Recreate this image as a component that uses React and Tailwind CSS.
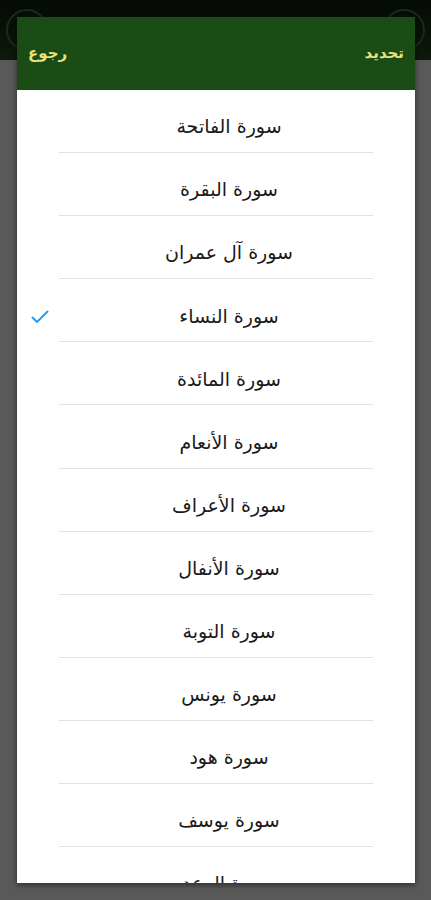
import React from 'react';

const surahs = [
  "سورة الفاتحة",
  "سورة البقرة",
  "سورة آل عمران",
  "سورة النساء",
  "سورة المائدة",
  "سورة الأنعام",
  "سورة الأعراف",
  "سورة الأنفال",
  "سورة التوبة",
  "سورة يونس",
  "سورة هود",
  "سورة يوسف",
  "سورة الرعد",
];

export default function App() {
  return (
    <div className="relative w-[431px] h-[900px] overflow-hidden bg-[#595959]" style={{ fontFamily: '"DejaVu Sans", sans-serif' }}>
      {/* app behind the dialog */}
      <div className="h-[60px] bg-gradient-to-b from-[#050a05] to-[#0d1a0d] flex items-center justify-between px-[6px]">
        <div className="w-[42px] h-[42px] rounded-full border-2 border-[#1e2a1e]" />
        <div className="w-[42px] h-[42px] rounded-full border-2 border-[#1e2a1e]" />
      </div>

      {/* dialog */}
      <div className="absolute left-[17px] top-[17px] w-[398px] h-[866px] bg-white overflow-hidden shadow-[0_2px_6px_rgba(0,0,0,0.5)] flex flex-col">
        <div className="h-[73px] shrink-0 bg-[#1b4c15] flex items-center justify-between px-[11px] text-[#e8e27a] text-[15px] font-bold" dir="ltr">
          <span dir="rtl">رجوع</span>
          <span dir="rtl">تحديد</span>
        </div>

        <div className="flex flex-col">
          {surahs.map((name, i) => (
            <div key={name} className="relative h-[63.1px] shrink-0 flex items-center justify-center pl-[26px]">
              {i === 3 && (
                <svg className="absolute left-[14px] top-[31px]" width="18" height="14" viewBox="0 0 18 14" fill="none">
                  <path d="M1.5 7.5 L6 12 L16.5 1.5" stroke="#2f9bef" strokeWidth="2" strokeLinecap="round" strokeLinejoin="round" />
                </svg>
              )}
              <span dir="rtl" className="text-[19px] text-[#1a1a1a] pt-[10px]">{name}</span>
              <div className="absolute bottom-0 left-[42px] right-[42px] h-px bg-[#e2e2e2]" />
            </div>
          ))}
        </div>
      </div>
    </div>
  );
}
